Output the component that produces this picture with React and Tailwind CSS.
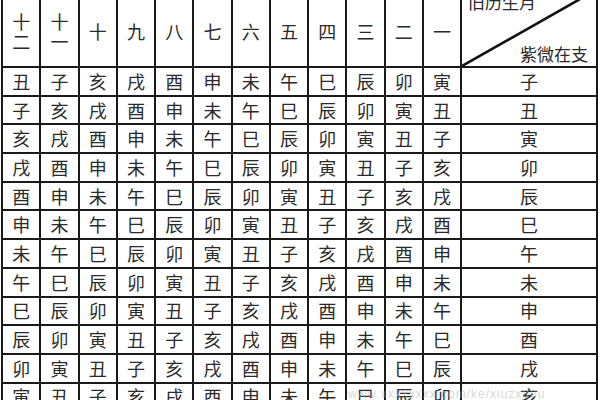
import React from 'react';

const BRANCHES = ['子', '丑', '寅', '卯', '辰', '巳', '午', '未', '申', '酉', '戌', '亥'];
const MONTHS = [['十', '二'], ['十', '一'], ['十'], ['九'], ['八'], ['七'], ['六'], ['五'], ['四'], ['三'], ['二'], ['一']];

// row r, month column c (0 = 十二月): the branch steps back one each way
const cellAt = (r, c) => BRANCHES[(((1 - c - r) % 12) + 12) % 12];

const App = () => {
  const rows = Array.from({ length: 12 }, (_, r) => r);

  return (
    <div
      className="relative w-[600px] h-[400px] overflow-hidden bg-white text-[#2a2a2a]"
      style={{ fontFamily: '"Noto Sans CJK SC", "Noto Sans CJK JP", sans-serif' }}
    >
      <div className="-mt-[12px] ml-[1px] w-[597px] border-l-2 border-t-2 border-[#1a1a1a] grid grid-cols-[repeat(12,38.25px)_136px]">
        {/* Header */}
        {MONTHS.map((m, i) => (
          <div
            key={i}
            className="h-[78px] border-r-2 border-b-2 border-[#1a1a1a] flex flex-col items-center justify-center pt-[6px] gap-[1px] text-[18px] leading-[19px]"
          >
            {m.map((ch, j) => (
              <span key={j}>{ch}</span>
            ))}
          </div>
        ))}
        <div className="relative h-[78px] border-r-2 border-b-2 border-[#1a1a1a] text-[17px] leading-[20px]">
          <svg className="absolute inset-0 w-full h-full" viewBox="0 0 134 76" preserveAspectRatio="none">
            <line x1="0" y1="76" x2="134" y2="0" stroke="#111" strokeWidth="2.6" />
          </svg>
          <span className="absolute left-[6px] top-[2px]">旧历生月</span>
          <span className="absolute right-[8px] bottom-[2px]">紫微在支</span>
        </div>

        {/* Body */}
        {rows.map((r) => (
          <React.Fragment key={r}>
            {MONTHS.map((_, c) => (
              <div
                key={c}
                className="h-[28.7px] border-r-2 border-b-2 border-[#1a1a1a] flex items-center justify-center text-[18px]"
              >
                {cellAt(r, c)}
              </div>
            ))}
            <div className="h-[28.7px] border-r-2 border-b-2 border-[#1a1a1a] flex items-center justify-center text-[18px]">
              {BRANCHES[r]}
            </div>
          </React.Fragment>
        ))}
      </div>

      {/* faint watermark over the last row */}
      <div
        className="absolute left-[348px] top-[385px] text-[12px] tracking-[1px] text-[#b0b0b0] opacity-50"
        style={{ fontFamily: '"Liberation Sans", sans-serif' }}
      >
        www.xxxxxxxx.com/ke/xiuzxuuu
      </div>
    </div>
  );
};

export default App;
